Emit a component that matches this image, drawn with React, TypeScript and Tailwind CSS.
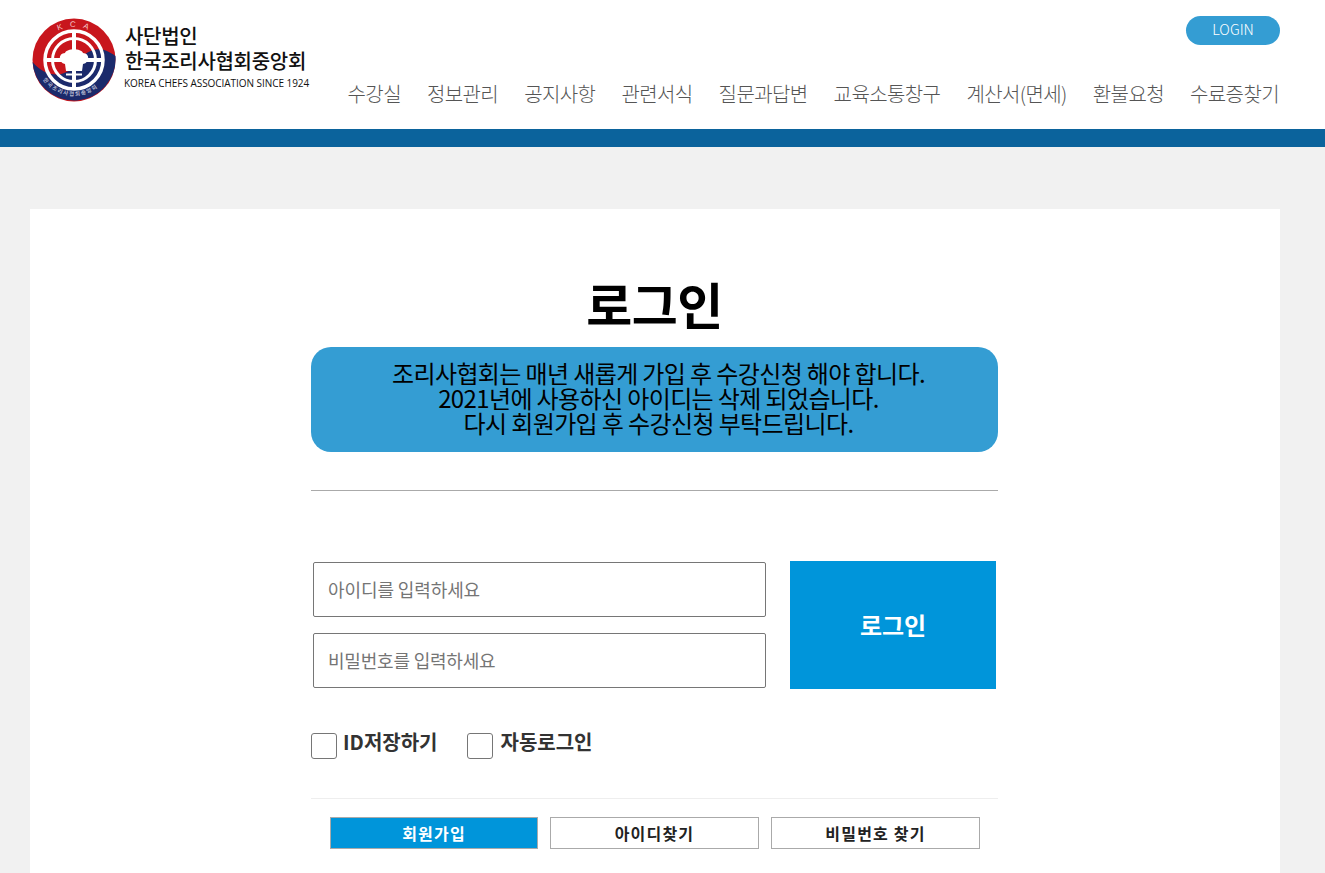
const FONT = "font-['Noto_Sans_CJK_KR','Noto_Sans',sans-serif]"

const menus = ['수강실', '정보관리', '공지사항', '관련서식', '질문과답변', '교육소통창구', '계산서(면세)', '환불요청', '수료증찾기']

function Logo() {
  return (
    <div className="flex items-start">
      <svg width="84" height="84" viewBox="0 0 84 84" className="mt-[18px] shrink-0">
        <defs>
          <path id="kca-top" d="M9 42 A33 33 0 0 1 75 42" fill="none" />
          <path id="kca-bottom" d="M4.5 46 A38 38 0 0 0 79.5 46" fill="none" />
        </defs>
        <circle cx="42" cy="42" r="41.5" fill="#c8161d" />
        <path d="M0.5 44 C14 60 32 60 42 48 C50 38 62 22 83.5 38 A41.5 41.5 0 0 1 0.5 44 Z" fill="#1b2a6b" />
        <circle cx="42" cy="42" r="29" fill="none" stroke="#fff" strokeWidth="3.5" />
        <circle cx="42" cy="42" r="21.5" fill="none" stroke="#fff" strokeWidth="3" />
        <rect x="40" y="14" width="4" height="56" fill="#fff" />
        <rect x="12" y="40" width="60" height="4" fill="#fff" />
        <path d="M34 53 L33 46 C26 45 26 35 33 35 C35 30 49 30 51 35 C58 35 58 45 51 46 L50 53 Z" fill="#fff" />
        <rect x="34" y="55.5" width="16" height="2" fill="#fff" />
        <text fontSize="8" fill="#f3c4c6" fontFamily="Liberation Sans" letterSpacing="7">
          <textPath href="#kca-top" startOffset="34%">KCA</textPath>
        </text>
        <text fontSize="5.5" fill="#e8e8f4" letterSpacing="1.2" fontFamily="Noto Sans CJK KR">
          <textPath href="#kca-bottom" startOffset="16%">한국조리사협회중앙회</textPath>
        </text>
      </svg>
      <div className="ml-[9px] mt-[23px] flex flex-col text-[#111]">
        <span className="text-[20px] leading-[25px] font-medium tracking-[-0.3px]">사단법인</span>
        <span className="text-[20px] leading-[25px] font-medium tracking-[-0.3px]">한국조리사협회중앙회</span>
        <span className="mt-[4px] -ml-[1px] text-[10px] leading-[12px] whitespace-nowrap font-['Open_Sans',sans-serif] tracking-[-0.05px]">KOREA CHEFS ASSOCIATION SINCE 1924</span>
      </div>
    </div>
  )
}

export default function App() {
  return (
    <div className={`min-h-screen bg-[#f1f1f1] ${FONT}`}>
      <header className="bg-white h-[129px] pl-[32px] pr-[45px] flex justify-between">
        <Logo />
        <div className="flex flex-col items-end pt-[16px]">
          <button type="button" className="w-[94px] h-[29px] pb-[3px] rounded-full bg-[#349dd3] text-white text-[14.5px] font-light leading-none">LOGIN</button>
          <nav className="mt-[36px] mr-[1px] flex gap-[26px]">
            {menus.map(m => (
              <a key={m} className="text-[20px] leading-[26px] text-[#555] font-light tracking-[-0.6px] whitespace-nowrap">{m}</a>
            ))}
          </nav>
        </div>
      </header>
      <div className="h-[18px] bg-[#0b639c]" />

      <main className="mx-[30px] w-[1250px] mt-[62px] bg-white pt-[62px] pb-[40px]">
        <div className="w-[687px] ml-[281px]">
          <h1 className="text-center text-[50px] leading-[64px] font-bold text-black tracking-[-0.5px]">로그인</h1>
          <div className="mt-[12px] h-[105px] rounded-[20px] bg-[#349dd3] pt-[13px] pl-[8px] text-center text-[24px] leading-[25px] text-black tracking-[-0.62px]">
            <p>조리사협회는 매년 새롭게 가입 후 수강신청 해야 합니다.</p>
            <p>2021년에 사용하신 아이디는 삭제 되었습니다.</p>
            <p>다시 회원가입 후 수강신청 부탁드립니다.</p>
          </div>
          <hr className="mt-[38px] border-0 border-t border-[#aaaaaa]" />

          <form className="mt-[70px] flex justify-between px-[2px]">
            <div className="flex flex-col gap-[16px] pt-[1px]">
              <input type="text" placeholder="아이디를 입력하세요" className="w-[453px] h-[55px] border border-[#767676] rounded-[2px] pl-[14px] pr-[14px] pb-[2px] text-[18px] tracking-[-0.1px] placeholder:text-[#757575] outline-none" />
              <input type="password" placeholder="비밀번호를 입력하세요" className="w-[453px] h-[55px] border border-[#767676] rounded-[2px] pl-[14px] pr-[14px] pb-[2px] text-[18px] tracking-[-0.2px] placeholder:text-[#757575] outline-none" />
            </div>
            <button type="button" className="w-[206px] h-[128px] bg-[#0095da] text-white text-[24px] font-semibold">로그인</button>
          </form>

          <div className="mt-[44px] flex items-start h-[26px]">
            <span className="w-[26px] h-[26px] border border-[#767676] rounded-[3px] bg-white" />
            <span className="ml-[6px] -mt-[4px] text-[20px] leading-[26px] font-bold text-[#333]">ID저장하기</span>
            <span className="ml-[30px] w-[26px] h-[26px] border border-[#767676] rounded-[3px] bg-white" />
            <span className="ml-[7px] -mt-[4px] text-[20px] leading-[26px] font-bold text-[#333]">자동로그인</span>
          </div>

          <div className="mt-[39px] border-t border-[#eeeeee] pt-[18px] pl-[19px] flex gap-[12px]">
            <a className="w-[208px] h-[32px] flex items-center justify-center bg-[#0095da] border border-[#aaaaaa] text-white text-[16px] font-bold tracking-[1.2px]">회원가입</a>
            <a className="w-[209px] h-[32px] flex items-center justify-center bg-white border border-[#aaaaaa] text-[#222] text-[16px] font-bold tracking-[1.2px]">아이디찾기</a>
            <a className="w-[209px] h-[32px] flex items-center justify-center bg-white border border-[#aaaaaa] text-[#222] text-[16px] font-bold tracking-[1.2px]">비밀번호 찾기</a>
          </div>
        </div>
      </main>
    </div>
  )
}
